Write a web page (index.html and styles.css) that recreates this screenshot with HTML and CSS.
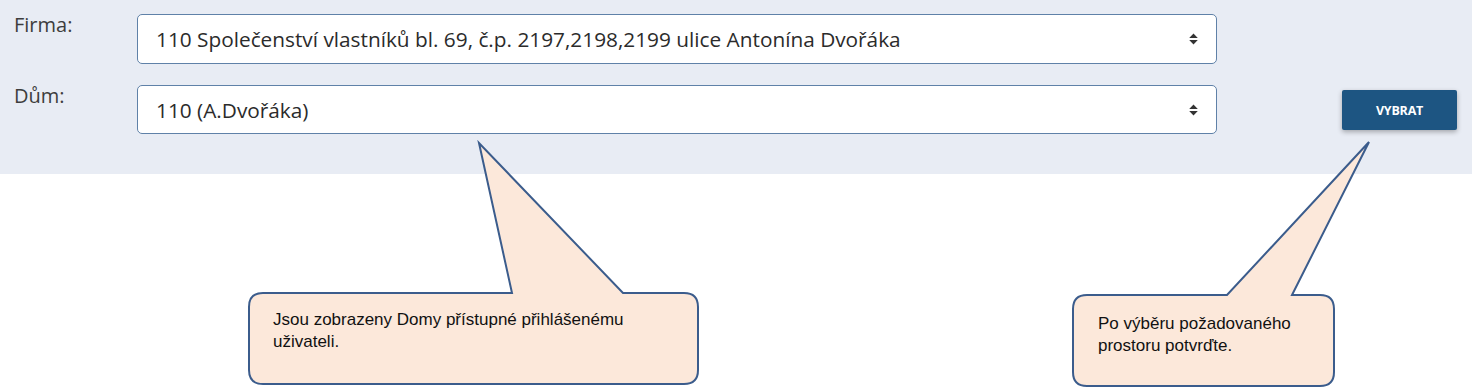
FILE: index.html
```html
<!DOCTYPE html>
<html lang="cs">
<head>
<meta charset="utf-8">
<link rel="stylesheet" href="styles.css">
</head>
<body>
<div class="panel">
  <div class="form">
    <div class="row">
      <label class="label">Firma:</label>
      <div class="select"><span>110 Společenství vlastníků bl. 69, č.p. 2197,2198,2199 ulice Antonína Dvořáka</span>
        <svg class="caret" width="9" height="12" viewBox="0 0 9 12"><path d="M4.5 0.5 L8.8 5 H0.2 Z M4.5 11.5 L8.8 7 H0.2 Z" fill="#333"/></svg>
      </div>
    </div>
    <div class="row">
      <label class="label">Dům:</label>
      <div class="select"><span>110 (A.Dvořáka)</span>
        <svg class="caret" width="9" height="12" viewBox="0 0 9 12"><path d="M4.5 0.5 L8.8 5 H0.2 Z M4.5 11.5 L8.8 7 H0.2 Z" fill="#333"/></svg>
      </div>
    </div>
  </div>
  <div class="actions">
    <button class="btn">VYBRAT</button>
  </div>
</div>

<svg class="overlay" width="1472" height="388" viewBox="0 0 1472 388">
  <path d="M263 293 H512 L479 143 L623 293 H684 Q698 293 698 307 V370 Q698 384 684 384 H263 Q249 384 249 370 V307 Q249 293 263 293 Z" fill="#fce8da" stroke="#3b5c8c" stroke-width="2" stroke-linejoin="miter"/>
  <path d="M1087 295 H1227 L1369 142 L1292 295 H1320 Q1334 295 1334 309 V372 Q1334 386 1320 386 H1087 Q1073 386 1073 372 V309 Q1073 295 1087 295 Z" fill="#fce8da" stroke="#3b5c8c" stroke-width="2" stroke-linejoin="miter"/>
</svg>
<div class="note note-1">Jsou zobrazeny Domy přístupné přihlášenému uživateli.</div>
<div class="note note-2">Po výběru požadovaného prostoru potvrďte.</div>
</body>
</html>
```

FILE: styles.css
```css
html, body {
  margin: 0;
  padding: 0;
  background: #ffffff;
}
body {
  width: 1472px;
  height: 388px;
  position: relative;
  overflow: hidden;
  font-family: "Open Sans", "Liberation Sans", sans-serif;
}
.panel {
  background: #e8ecf4;
  height: 174px;
  box-sizing: border-box;
  padding: 14px 15px 0 14px;
  display: flex;
  align-items: flex-start;
}
.form {
  display: flex;
  flex-direction: column;
  gap: 21px;
}
.row {
  display: flex;
  align-items: flex-start;
}
.label {
  width: 123px;
  font-size: 20px;
  color: #3d3d3d;
  margin-top: -1px;
  line-height: 24px;
}
.select {
  width: 1080px;
  height: 50px;
  box-sizing: border-box;
  background: #fff;
  border: 1.5px solid #5f81a8;
  border-radius: 5px;
  display: flex;
  align-items: center;
  justify-content: space-between;
  padding: 0 18px 0 18px;
  font-size: 20.8px;
  color: #2b2b2b;
}
.row + .row .select {
  height: 49px;
}
.caret {
  display: block;
}
.actions {
  margin-left: auto;
  padding-top: 76px;
}
.btn {
  width: 115px;
  height: 40px;
  background: #1d5582;
  color: #fff;
  border: none;
  border-radius: 2px;
  font-family: "Open Sans", "Liberation Sans", sans-serif;
  font-weight: 700;
  font-size: 12.5px;
  letter-spacing: -0.2px;
  box-shadow: 0 2px 5px rgba(0,0,0,0.3);
}
.overlay {
  position: absolute;
  left: 0;
  top: 0;
}
.note {
  position: absolute;
  font-family: "Liberation Sans", "Open Sans", sans-serif;
  font-size: 17px;
  line-height: 22px;
  color: #111;
}
.note-1 {
  left: 273px;
  top: 309px;
  width: 380px;
}
.note-2 {
  left: 1098px;
  top: 313px;
  width: 215px;
}
```
